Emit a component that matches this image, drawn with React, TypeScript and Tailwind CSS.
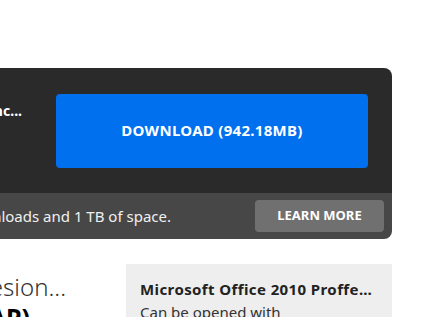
import React from 'react';

const FONT = '"Noto Sans", "Open Sans", "Liberation Sans", sans-serif';

export default function App() {
  return (
    <div className="w-[434px] h-[317px] overflow-hidden bg-white" style={{ fontFamily: FONT }}>
      {/* Download card */}
      <div className="mt-[68px] ml-[-300px] w-[692px] rounded-lg overflow-hidden">
        <div className="h-[125px] bg-[#2a2a2a] flex items-center pr-[24px]">
          <div className="flex-1 min-w-0 flex justify-end self-start pt-[33px] pr-[34px] overflow-hidden">
            <span className="shrink-0 whitespace-nowrap text-white font-bold text-[14px] leading-[20px]">
              Microsoft Office 2010 Proffesional Plus by Microsoft Corp, Inc...
            </span>
          </div>
          <button className="w-[312px] h-[74px] shrink-0 rounded bg-[#0070ef] text-white font-bold text-[15px] tracking-[0.3px]">
            DOWNLOAD (942.18MB)
          </button>
        </div>
        <div className="h-[46px] bg-[#474747] flex items-center pr-[8px]">
          <div className="flex-1 min-w-0 flex justify-end pr-[84px] overflow-hidden">
            <span className="shrink-0 whitespace-nowrap text-[#f0f0f0] text-[15px] leading-[20px]">
              Premium members get unlimited downloads and 1 TB of space.
            </span>
          </div>
          <button className="w-[129px] h-[32px] shrink-0 rounded bg-[#707070] text-white font-bold text-[13px]">
            LEARN MORE
          </button>
        </div>
      </div>

      {/* Lower content */}
      <div className="mt-[25px] flex">
        <div className="w-[126px] shrink-0 pt-[8px] overflow-hidden">
          <div className="flex justify-end pr-[60px]">
            <span className="shrink-0 whitespace-nowrap text-[#333] text-[24px] font-light leading-[30px]">
              Microsoft Office 2010 Profesion...
            </span>
          </div>
          <div className="flex justify-end pr-[96px]">
            <span className="shrink-0 whitespace-nowrap text-black text-[25px] font-bold leading-[30px]">
              (WRAP)
            </span>
          </div>
        </div>
        <div className="w-[266px] shrink-0 bg-[#eeeeee] px-[14px] pt-[15px] h-[60px]">
          <div className="truncate font-bold text-[#222] text-[15px] leading-[20px] tracking-[0.4px]">
            Microsoft Office 2010 Proffesional Plus
          </div>
          <div className="text-[#333] text-[15px] leading-[22px] mt-[2px]">
            Can be opened with
          </div>
        </div>
      </div>
    </div>
  );
}
